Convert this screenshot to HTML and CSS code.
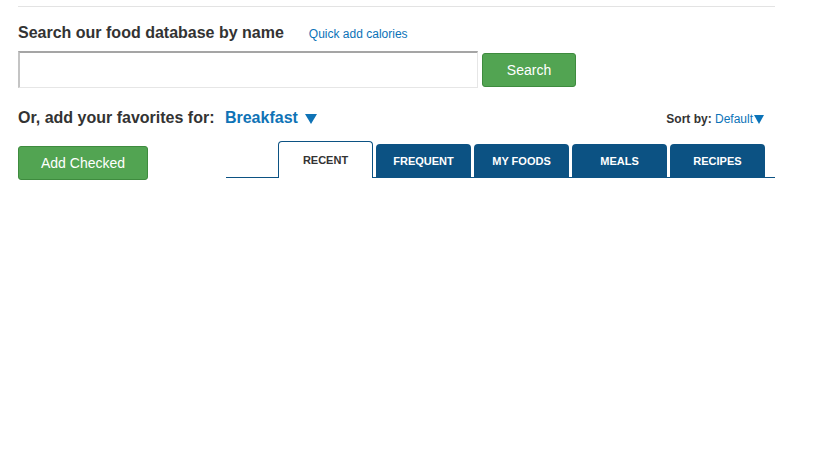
FILE: index.html
```html
<!DOCTYPE html>
<html lang="en">
<head>
    <meta charset="UTF-8">
    <title>Add Food</title>
    <link rel="stylesheet" href="styles.css">
</head>
<body>
    <div class="food-search">
        <div class="search-head">
            <h2>Search our food database by name</h2>
            <a href="#" class="quick-add">Quick add calories</a>
        </div>
        <form class="search-form">
            <input type="text" class="search-input">
            <button type="button" class="btn-green search-btn">Search</button>
        </form>

        <div class="favorites-head">
            <h3>Or, add your favorites for: <a href="#" class="meal-select">Breakfast <span class="caret"></span></a></h3>
            <div class="sort-by">Sort by: <a href="#">Default<span class="caret small"></span></a></div>
        </div>

        <div class="favorites-bar">
            <button type="button" class="btn-green add-checked">Add Checked</button>
            <ul class="tabs">
                <li class="tab active">RECENT</li>
                <li class="tab">FREQUENT</li>
                <li class="tab">MY FOODS</li>
                <li class="tab">MEALS</li>
                <li class="tab">RECIPES</li>
            </ul>
        </div>
    </div>
</body>
</html>
```

FILE: styles.css
```css
body {
    margin: 0;
    font-family: "Liberation Sans", Arial, sans-serif;
    color: #333;
    background: #fff;
}

a {
    color: #0b73b8;
    text-decoration: none;
}

.food-search {
    width: 757px;
    margin-left: 18px;
    margin-top: 6px;
    border-top: 1px solid #e3e3e3;
}

.search-head {
    display: flex;
    align-items: baseline;
    margin-top: 17px;
}

.search-head h2 {
    margin: 0;
    font-size: 16px;
    font-weight: bold;
    color: #333;
}

.quick-add {
    margin-left: 25px;
    font-size: 12px;
}

.search-form {
    display: flex;
    align-items: center;
    margin: 9px 0 0 0;
}

.search-input {
    box-sizing: border-box;
    width: 460px;
    height: 37px;
    margin: 0;
    padding: 0 6px;
    border: 1px solid #e6e6e6;
    border-top: 2px solid #a5a5a5;
    border-left: 2px solid #c4c4c4;
    background: #fff;
}

.btn-green {
    box-sizing: border-box;
    background: #52a452;
    border: 1px solid #3e8b3e;
    border-radius: 3px;
    color: #fff;
    font-family: "Liberation Sans", Arial, sans-serif;
    font-size: 14px;
    cursor: pointer;
}

.search-btn {
    width: 94px;
    height: 34px;
    margin-left: 4px;
}

.favorites-head {
    display: flex;
    align-items: center;
    justify-content: space-between;
    margin-top: 21px;
}

.favorites-head h3 {
    margin: 0;
    font-size: 16px;
    font-weight: bold;
    color: #333;
}

.meal-select {
    margin-left: 6px;
    color: #0f73b6;
}

.caret {
    display: inline-block;
    width: 0;
    height: 0;
    margin-left: 3px;
    border-left: 6px solid transparent;
    border-right: 6px solid transparent;
    border-top: 10px solid #0f73b6;
    vertical-align: -1px;
}

.caret.small {
    margin-left: 1px;
    border-left-width: 5px;
    border-right-width: 5px;
    border-top-width: 9px;
    border-top-color: #0b73b8;
}

.sort-by {
    margin-right: 11px;
    margin-top: 2px;
    font-size: 12px;
    font-weight: bold;
    color: #333;
}

.sort-by a {
    font-weight: normal;
}

.favorites-bar {
    display: flex;
    align-items: flex-start;
    justify-content: space-between;
    margin-top: 14px;
}

.add-checked {
    width: 130px;
    height: 34px;
    margin-top: 5px;
}

.tabs {
    display: flex;
    align-items: flex-end;
    gap: 3px;
    width: 497px;
    height: 36px;
    margin: 0;
    padding: 0 0 0 52px;
    list-style: none;
    border-bottom: 1px solid #0c5283;
}

.tab {
    box-sizing: border-box;
    width: 95px;
    height: 34px;
    line-height: 35px;
    margin-bottom: -1px;
    text-align: center;
    font-size: 11px;
    font-weight: bold;
    color: #fff;
    background: #0c5283;
    border-radius: 4px 4px 0 0;
}

.tab.active {
    height: 37px;
    line-height: 36px;
    color: #333;
    background: #fff;
    border: 1px solid #0c5283;
    border-bottom: none;
}
```
